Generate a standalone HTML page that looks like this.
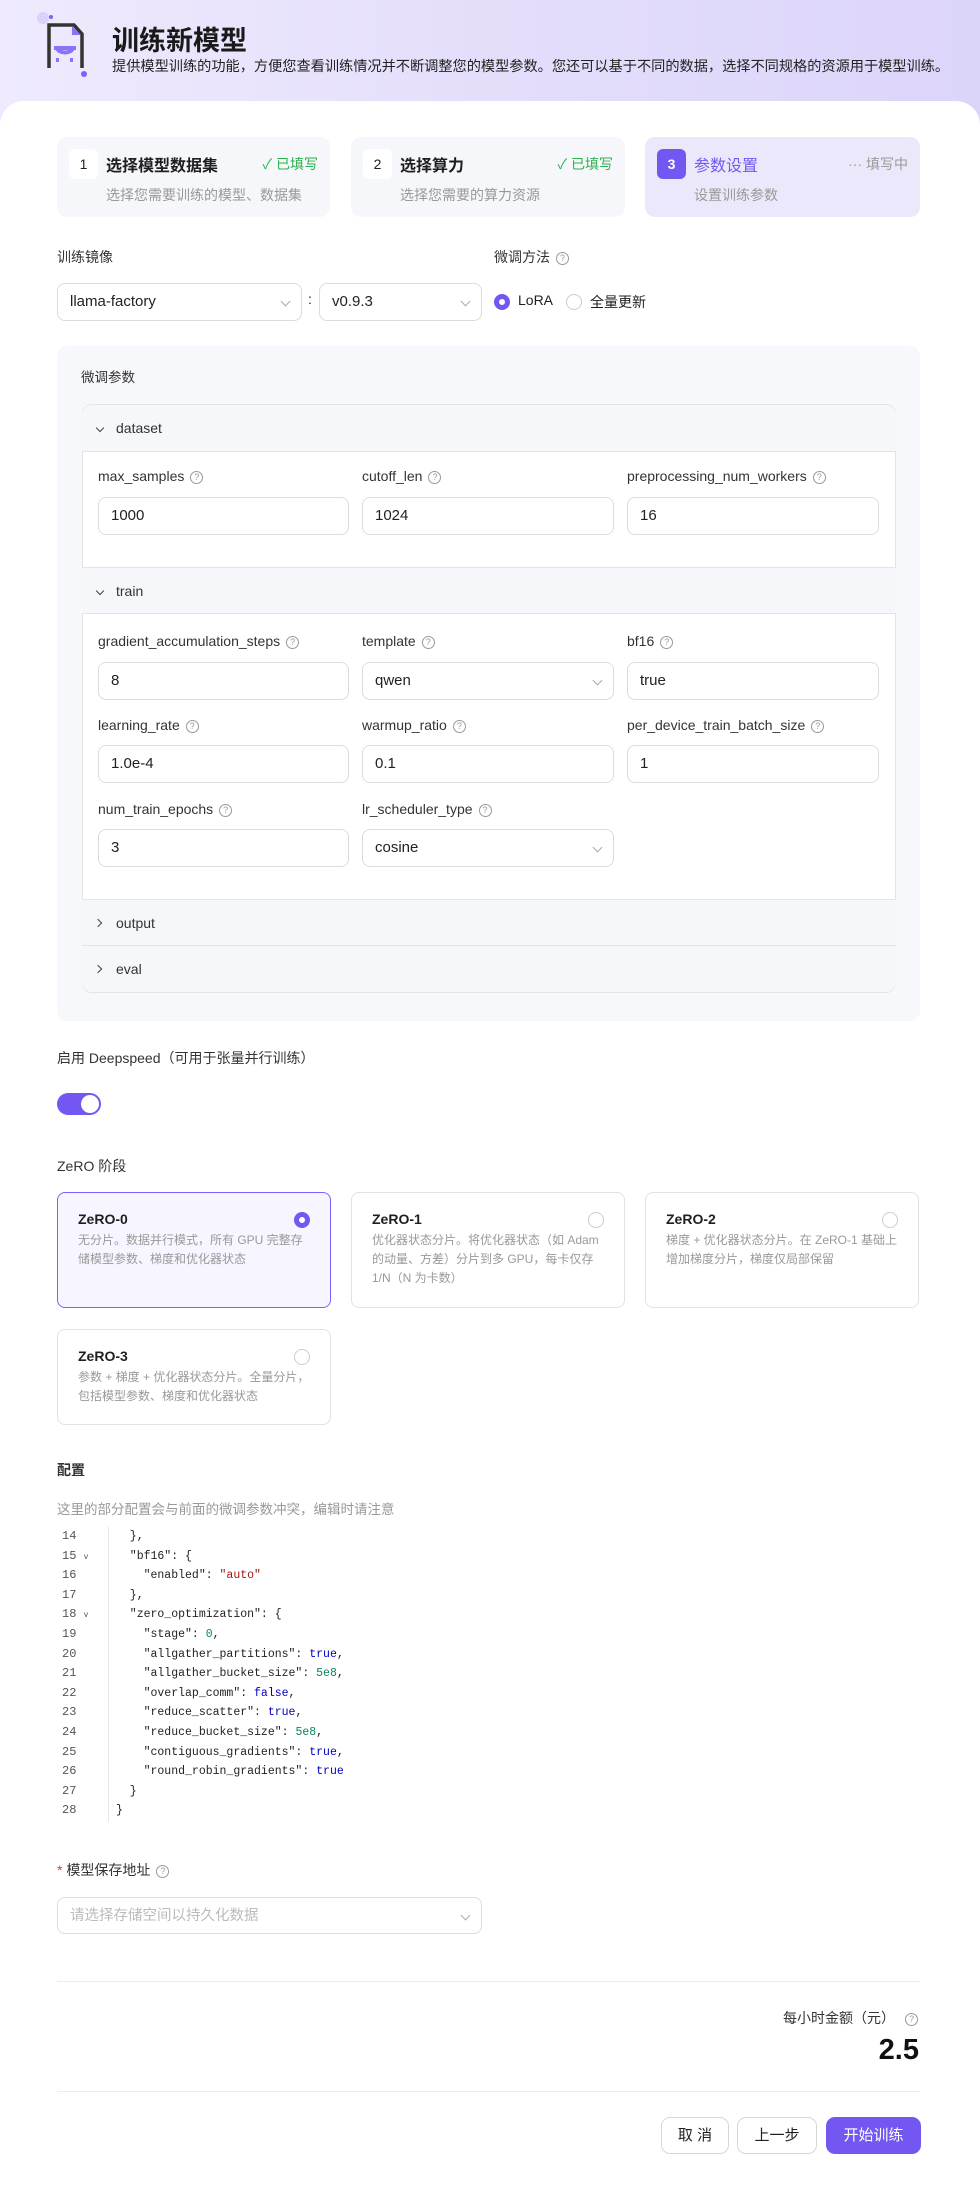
<!DOCTYPE html>
<html><head><meta charset="utf-8"><style>
*{box-sizing:border-box;margin:0;padding:0}
body{width:980px;height:2187px;position:relative;font-family:"Liberation Sans","Noto Sans CJK SC",sans-serif;color:#1f1f1f;background:#fff;overflow:hidden}
.a{position:absolute}
.hdr{left:0;top:0;width:980px;height:140px;background:linear-gradient(90deg,#efeafd 0%,#e4defb 50%,#dcd5fa 100%)}
.main{left:0;top:101px;width:980px;height:2087px;background:#fff;border-radius:24px 24px 0 0}
.step{height:80px;top:137px;border-radius:10px;background:#f6f7fb}
.num{left:12px;top:12px;width:29px;height:30px;background:#fff;border-radius:6px;text-align:center;line-height:30px;font-size:14px}
.st{left:49px;top:15px;font-size:16px;font-weight:bold}
.sd{left:49px;top:48px;font-size:14px;color:#999}
.ok{right:12px;top:17px;font-size:14px;color:#2bb24c}
.lbl{font-size:14px;color:#333}
.q{display:inline-block;width:13px;height:13px;border:1px solid #999;border-radius:50%;font-size:9px;line-height:11px;text-align:center;color:#999;vertical-align:1px;margin-left:6px}
.inp{height:38px;border:1px solid #dcdcdc;border-radius:8px;background:#fff;font-size:15px;line-height:36px;padding-left:12px;color:#222}
.chev{position:absolute;right:12px;top:14px;width:7px;height:7px;border-right:1px solid #aaa;border-bottom:1px solid #aaa;transform:rotate(45deg)}
.sec{left:82px;width:814px;height:47px;background:#f6f7fa;border-bottom:1px solid #e3e4e8;font-size:14px;line-height:46px;padding-left:34px;color:#333}
.sec i{position:absolute;left:15px;top:20px;width:6px;height:6px;border-right:1.3px solid #444;border-bottom:1.3px solid #444;transform:rotate(45deg)}
.sec i.r{transform:rotate(-45deg);top:20px;left:13px}
.card{width:274px;border:1px solid #e2e2e6;border-radius:8px;background:#fff}
.card b{position:absolute;left:20px;top:18px;font-size:14px}
.card p{position:absolute;left:20px;top:38px;right:20px;font-size:12px;line-height:19px;color:#999}
.rd{position:absolute;right:20px;top:19px;width:16px;height:16px;border:1px solid #ccc;border-radius:50%}
.code{left:0;top:1527px;font-family:"Liberation Mono",monospace;font-size:11.5px;line-height:19.6px;white-space:pre}
.ln{position:absolute;left:62px;color:#555;font-size:12px}
.k{color:#222}.s{color:#a31515}.n{color:#098658}.b{color:#0000c0}
.btn{top:2117px;height:37px;border:1px solid #d8d8d8;border-radius:9px;font-size:15px;text-align:center;line-height:35px;background:#fff}
</style></head><body>
<div class="a hdr"></div>
<svg class="a" style="left:34px;top:10px" width="60" height="70" viewBox="0 0 60 70">
<circle cx="9" cy="8" r="6" fill="#d9d2fb"/><circle cx="17" cy="7" r="2" fill="#7b61ff"/><circle cx="50" cy="64" r="3" fill="#7b61ff"/>
<path d="M15 58 V15 H40 L48 24 V58" fill="none" stroke="#333" stroke-width="3.5"/>
<path d="M38 16 L47 25 H38 Z" fill="#8b73f5"/>
<path d="M20 38 H42 M23 38 C25 44 37 44 39 38" fill="none" stroke="#8b73f5" stroke-width="4"/>
<rect x="22" y="48" width="3" height="4" fill="#8b73f5"/><rect x="36" y="48" width="3" height="4" fill="#8b73f5"/>
</svg>
<div class="a" style="left:112px;top:19px;font-size:27px;font-weight:bold;color:#1a1a1a">训练新模型</div>
<div class="a" style="left:112px;top:56px;font-size:14.2px;color:#222;white-space:nowrap">提供模型训练的功能，方便您查看训练情况并不断调整您的模型参数。您还可以基于不同的数据，选择不同规格的资源用于模型训练。</div>
<div class="a main"></div>

<div class="a step" style="left:57px;width:273px"><div class="a num">1</div><div class="a st">选择模型数据集</div><div class="a ok">✓ 已填写</div><div class="a sd">选择您需要训练的模型、数据集</div></div>
<div class="a step" style="left:351px;width:274px"><div class="a num">2</div><div class="a st">选择算力</div><div class="a ok">✓ 已填写</div><div class="a sd">选择您需要的算力资源</div></div>
<div class="a step" style="left:645px;width:275px;background:#ece8fb"><div class="a num" style="background:#7357f0;color:#fff;font-weight:bold">3</div><div class="a st" style="color:#7357f0;font-weight:normal">参数设置</div><div class="a ok" style="color:#999">··· 填写中</div><div class="a sd">设置训练参数</div></div>

<div class="a lbl" style="left:57px;top:247px">训练镜像</div>
<div class="a lbl" style="left:494px;top:247px">微调方法<span class="q">?</span></div>
<div class="a inp" style="left:57px;top:283px;width:245px">llama-factory<span class="chev"></span></div>
<div class="a" style="left:308px;top:291px;font-size:14px">:</div>
<div class="a inp" style="left:319px;top:283px;width:163px">v0.9.3<span class="chev"></span></div>
<div class="a" style="left:494px;top:294px;width:16px;height:16px;border-radius:50%;border:5px solid #7357f0"></div>
<div class="a" style="left:518px;top:292px;font-size:14px">LoRA</div>
<div class="a" style="left:566px;top:294px;width:16px;height:16px;border-radius:50%;border:1px solid #ccc"></div>
<div class="a" style="left:590px;top:292px;font-size:14px">全量更新</div>

<div class="a" style="left:57px;top:346px;width:863px;height:675px;background:#f7f8fb;border-radius:10px"></div>
<div class="a lbl" style="left:81px;top:366px;font-size:13.5px">微调参数</div>
<div class="a" style="left:82px;top:404px;width:814px;height:589px;background:#fff;border:1px solid #e3e4e8;border-radius:10px;overflow:hidden"></div>
<div class="a sec" style="top:405px;border-radius:10px 10px 0 0"><i></i>dataset</div>
<div class="a lbl" style="left:98px;top:468px">max_samples<span class="q">?</span></div>
<div class="a lbl" style="left:362px;top:468px">cutoff_len<span class="q">?</span></div>
<div class="a lbl" style="left:627px;top:468px">preprocessing_num_workers<span class="q">?</span></div>
<div class="a inp" style="left:98px;top:497px;width:251px">1000</div>
<div class="a inp" style="left:362px;top:497px;width:252px">1024</div>
<div class="a inp" style="left:627px;top:497px;width:252px">16</div>
<div class="a sec" style="top:567px;border-top:1px solid #e3e4e8"><i></i>train</div>
<div class="a lbl" style="left:98px;top:633px">gradient_accumulation_steps<span class="q">?</span></div>
<div class="a lbl" style="left:362px;top:633px">template<span class="q">?</span></div>
<div class="a lbl" style="left:627px;top:633px">bf16<span class="q">?</span></div>
<div class="a inp" style="left:98px;top:662px;width:251px">8</div>
<div class="a inp" style="left:362px;top:662px;width:252px">qwen<span class="chev"></span></div>
<div class="a inp" style="left:627px;top:662px;width:252px">true</div>
<div class="a lbl" style="left:98px;top:717px">learning_rate<span class="q">?</span></div>
<div class="a lbl" style="left:362px;top:717px">warmup_ratio<span class="q">?</span></div>
<div class="a lbl" style="left:627px;top:717px">per_device_train_batch_size<span class="q">?</span></div>
<div class="a inp" style="left:98px;top:745px;width:251px">1.0e-4</div>
<div class="a inp" style="left:362px;top:745px;width:252px">0.1</div>
<div class="a inp" style="left:627px;top:745px;width:252px">1</div>
<div class="a lbl" style="left:98px;top:801px">num_train_epochs<span class="q">?</span></div>
<div class="a lbl" style="left:362px;top:801px">lr_scheduler_type<span class="q">?</span></div>
<div class="a inp" style="left:98px;top:829px;width:251px">3</div>
<div class="a inp" style="left:362px;top:829px;width:252px">cosine<span class="chev"></span></div>
<div class="a sec" style="top:899px;border-top:1px solid #e3e4e8"><i class="r"></i>output</div>
<div class="a sec" style="top:946px;border-bottom:none;border-radius:0 0 10px 10px;height:46px"><i class="r"></i>eval</div>

<div class="a lbl" style="left:57px;top:1048px">启用 Deepspeed（可用于张量并行训练）</div>
<div class="a" style="left:57px;top:1093px;width:44px;height:22px;border-radius:11px;background:#7357f0"><div class="a" style="left:24px;top:2px;width:18px;height:18px;border-radius:50%;background:#fff"></div></div>
<div class="a lbl" style="left:57px;top:1156px">ZeRO 阶段</div>

<div class="a card" style="left:57px;top:1192px;height:116px;border-color:#7b61ff;background:#f7f5ff"><b>ZeRO-0</b><span class="rd" style="border:5px solid #7357f0;background:#fff"></span><p>无分片。数据并行模式，所有 GPU 完整存储模型参数、梯度和优化器状态</p></div>
<div class="a card" style="left:351px;top:1192px;height:116px"><b>ZeRO-1</b><span class="rd"></span><p>优化器状态分片。将优化器状态（如 Adam 的动量、方差）分片到多 GPU，每卡仅存 1/N（N 为卡数）</p></div>
<div class="a card" style="left:645px;top:1192px;height:116px"><b>ZeRO-2</b><span class="rd"></span><p>梯度 + 优化器状态分片。在 ZeRO-1 基础上增加梯度分片，梯度仅局部保留</p></div>
<div class="a card" style="left:57px;top:1329px;height:96px"><b>ZeRO-3</b><span class="rd"></span><p>参数 + 梯度 + 优化器状态分片。全量分片，包括模型参数、梯度和优化器状态</p></div>

<div class="a lbl" style="left:57px;top:1460px;font-weight:bold">配置</div>
<div class="a" style="left:57px;top:1498px;font-size:13.5px;color:#999">这里的部分配置会与前面的微调参数冲突，编辑时请注意</div>
<div class="a" style="left:108px;top:1527px;width:1px;height:295px;background:#e6e6e6"></div>
<div class="a code"><span class="ln" style="top:0">14</span><span class="ln" style="top:19.6px">15 <small style="font-size:8px">v</small></span><span class="ln" style="top:39.2px">16</span><span class="ln" style="top:58.8px">17</span><span class="ln" style="top:78.4px">18 <small style="font-size:8px">v</small></span><span class="ln" style="top:98px">19</span><span class="ln" style="top:117.6px">20</span><span class="ln" style="top:137.2px">21</span><span class="ln" style="top:156.8px">22</span><span class="ln" style="top:176.4px">23</span><span class="ln" style="top:196px">24</span><span class="ln" style="top:215.6px">25</span><span class="ln" style="top:235.2px">26</span><span class="ln" style="top:254.8px">27</span><span class="ln" style="top:274.4px">28</span><div style="position:absolute;left:116px;top:0"><span class="k">  },
  "bf16": {
    "enabled": <span class="s">"auto"</span>
  },
  "zero_optimization": {
    "stage": <span class="n">0</span>,
    "allgather_partitions": <span class="b">true</span>,
    "allgather_bucket_size": <span class="n">5e8</span>,
    "overlap_comm": <span class="b">false</span>,
    "reduce_scatter": <span class="b">true</span>,
    "reduce_bucket_size": <span class="n">5e8</span>,
    "contiguous_gradients": <span class="b">true</span>,
    "round_robin_gradients": <span class="b">true</span>
  }
}</span></div></div>

<div class="a lbl" style="left:57px;top:1860px"><span style="color:#e53935">* </span>模型保存地址<span class="q">?</span></div>
<div class="a inp" style="left:57px;top:1897px;width:425px;height:37px;color:#bbb;font-size:14.5px">请选择存储空间以持久化数据<span class="chev"></span></div>
<div class="a" style="left:57px;top:1981px;width:863px;height:1px;background:#ececec"></div>
<div class="a lbl" style="right:62px;top:2008px">每小时金额（元）<span class="q" style="margin-left:10px">?</span></div>
<div class="a" style="right:61px;top:2034px;font-size:29px;font-weight:bold;color:#111">2.5</div>
<div class="a" style="left:57px;top:2091px;width:863px;height:1px;background:#ececec"></div>
<div class="a btn" style="left:661px;width:68px">取 消</div>
<div class="a btn" style="left:737px;width:80px">上一步</div>
<div class="a btn" style="left:826px;width:95px;background:#7357f0;border-color:#7357f0;color:#fff">开始训练</div>
</body></html>
